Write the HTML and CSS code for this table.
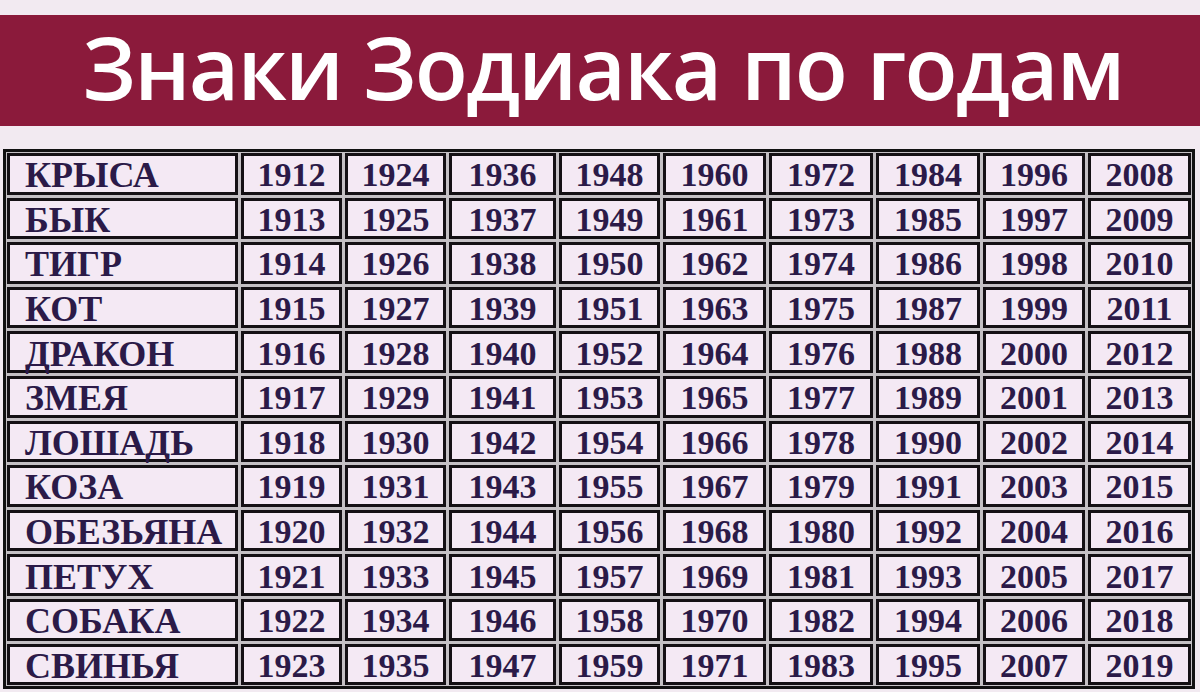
FILE: index.html
```html
<!DOCTYPE html>
<html lang="ru">
<head>
<meta charset="utf-8">
<title>Знаки Зодиака по годам</title>
<link rel="stylesheet" href="styles.css">
</head>
<body>
<div class="page">
  <header class="band"><h1 class="title">Знаки Зодиака по годам</h1></header>
  <div class="table-wrap">
    <div class="grid">
      <div class="cell name">КРЫСА</div><div class="cell">1912</div><div class="cell">1924</div><div class="cell">1936</div><div class="cell">1948</div><div class="cell">1960</div><div class="cell">1972</div><div class="cell">1984</div><div class="cell">1996</div><div class="cell">2008</div>
      <div class="cell name">БЫК</div><div class="cell">1913</div><div class="cell">1925</div><div class="cell">1937</div><div class="cell">1949</div><div class="cell">1961</div><div class="cell">1973</div><div class="cell">1985</div><div class="cell">1997</div><div class="cell">2009</div>
      <div class="cell name">ТИГР</div><div class="cell">1914</div><div class="cell">1926</div><div class="cell">1938</div><div class="cell">1950</div><div class="cell">1962</div><div class="cell">1974</div><div class="cell">1986</div><div class="cell">1998</div><div class="cell">2010</div>
      <div class="cell name">КОТ</div><div class="cell">1915</div><div class="cell">1927</div><div class="cell">1939</div><div class="cell">1951</div><div class="cell">1963</div><div class="cell">1975</div><div class="cell">1987</div><div class="cell">1999</div><div class="cell">2011</div>
      <div class="cell name">ДРАКОН</div><div class="cell">1916</div><div class="cell">1928</div><div class="cell">1940</div><div class="cell">1952</div><div class="cell">1964</div><div class="cell">1976</div><div class="cell">1988</div><div class="cell">2000</div><div class="cell">2012</div>
      <div class="cell name">ЗМЕЯ</div><div class="cell">1917</div><div class="cell">1929</div><div class="cell">1941</div><div class="cell">1953</div><div class="cell">1965</div><div class="cell">1977</div><div class="cell">1989</div><div class="cell">2001</div><div class="cell">2013</div>
      <div class="cell name">ЛОШАДЬ</div><div class="cell">1918</div><div class="cell">1930</div><div class="cell">1942</div><div class="cell">1954</div><div class="cell">1966</div><div class="cell">1978</div><div class="cell">1990</div><div class="cell">2002</div><div class="cell">2014</div>
      <div class="cell name">КОЗА</div><div class="cell">1919</div><div class="cell">1931</div><div class="cell">1943</div><div class="cell">1955</div><div class="cell">1967</div><div class="cell">1979</div><div class="cell">1991</div><div class="cell">2003</div><div class="cell">2015</div>
      <div class="cell name">ОБЕЗЬЯНА</div><div class="cell">1920</div><div class="cell">1932</div><div class="cell">1944</div><div class="cell">1956</div><div class="cell">1968</div><div class="cell">1980</div><div class="cell">1992</div><div class="cell">2004</div><div class="cell">2016</div>
      <div class="cell name">ПЕТУХ</div><div class="cell">1921</div><div class="cell">1933</div><div class="cell">1945</div><div class="cell">1957</div><div class="cell">1969</div><div class="cell">1981</div><div class="cell">1993</div><div class="cell">2005</div><div class="cell">2017</div>
      <div class="cell name">СОБАКА</div><div class="cell">1922</div><div class="cell">1934</div><div class="cell">1946</div><div class="cell">1958</div><div class="cell">1970</div><div class="cell">1982</div><div class="cell">1994</div><div class="cell">2006</div><div class="cell">2018</div>
      <div class="cell name">СВИНЬЯ</div><div class="cell">1923</div><div class="cell">1935</div><div class="cell">1947</div><div class="cell">1959</div><div class="cell">1971</div><div class="cell">1983</div><div class="cell">1995</div><div class="cell">2007</div><div class="cell">2019</div>
    </div>
  </div>
</div>
</body>
</html>
```

FILE: styles.css
```css
html, body {
  margin: 0;
  padding: 0;
  background: #f2eaf1;
}
.page {
  width: 1200px;
  height: 692px;
  overflow: hidden;
  padding-top: 15px;
  box-sizing: border-box;
}
.band {
  background: #8b1a3b;
  height: 111px;
  display: flex;
  align-items: center;
  justify-content: center;
}
.title {
  margin: 0;
  color: #ffffff;
  font-family: "Open Sans", "Noto Sans", sans-serif;
  font-weight: 600;
  font-size: 87px;
  line-height: 1;
  padding-bottom: 8px;
  padding-left: 6px;
  letter-spacing: -1.8px;
}
.table-wrap {
  margin: 23px 0 0 3px;
  width: 1192px;
  border: 3px solid #111;
  padding: 1px;
  box-sizing: border-box;
  background: #c4c0c4;
}
.grid {
  display: grid;
  grid-template-columns: 231px 101px 101px 107px 101px 103px 104px 104px 102px 103px;
  grid-auto-rows: 41.6px;
  gap: 3px;
}
.cell {
  border: 3px solid #141014;
  background: #f4e9f4;
  display: flex;
  align-items: center;
  justify-content: center;
  font-family: "Liberation Serif", "DejaVu Serif", serif;
  font-weight: bold;
  font-size: 34px;
  font-variant-numeric: oldstyle-nums;
  color: #2b1a48;
  line-height: 1;
  padding-top: 3px;
  box-sizing: border-box;
}
.name {
  justify-content: flex-start;
  padding-left: 15px;
  font-size: 36px;
}
```
